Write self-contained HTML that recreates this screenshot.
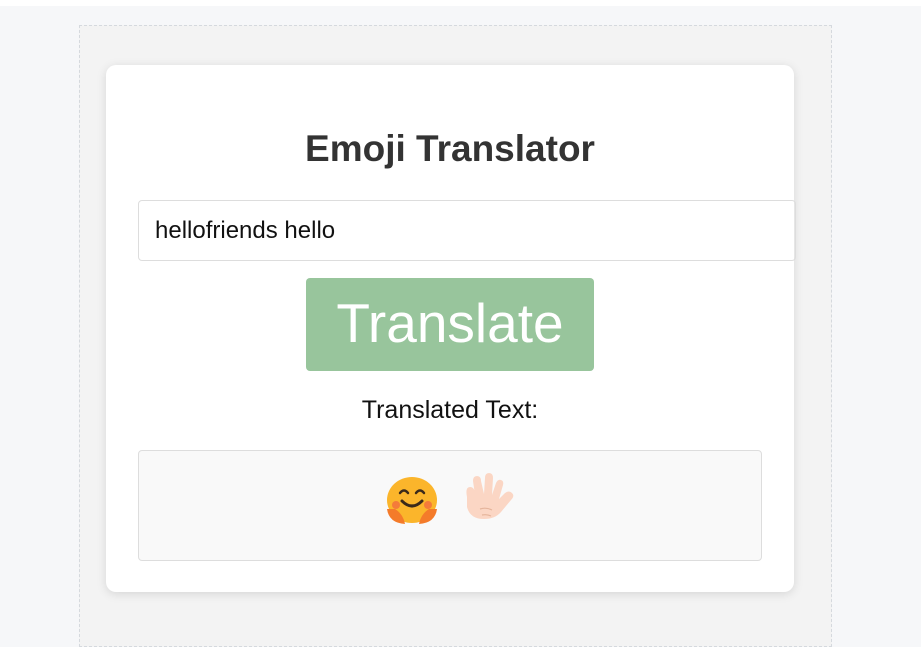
<!DOCTYPE html>
<html><head><style>
body{margin:0;width:921px;height:616px;overflow:hidden;background:#f6f7f9;font-family:"Liberation Sans",Arial,sans-serif;position:relative}
.top{position:absolute;left:0;top:0;width:921px;height:6px;background:#fff}
.box{position:absolute;left:79px;top:25px;width:751px;height:620px;background:#f3f3f3;border:1px dashed #d5d9de}
.card{position:absolute;left:106px;top:65px;width:688px;height:527px;background:#fff;border-radius:10px;box-shadow:0 2px 10px rgba(0,0,0,.12)}
h1{position:absolute;left:0;width:688px;top:63px;margin:0;text-align:center;font-size:37px;color:#333;font-weight:bold}
.in{position:absolute;left:32px;top:135px;width:658px;height:61px;border:1px solid #ddd;border-radius:4px;box-sizing:border-box;font-size:24px;line-height:59px;padding-left:16px;color:#111}
.btn{position:absolute;left:200px;top:213px;width:288px;height:93px;background:#98c59c;border-radius:4px;color:#fff;font-size:55px;text-align:center;line-height:91px}
.lab{position:absolute;left:0;width:688px;top:331px;text-align:center;font-size:25px;color:#111}
.out{position:absolute;left:32px;top:385px;width:624px;height:111px;background:#f9f9f9;border:1px solid #ddd;border-radius:4px;box-sizing:border-box}
</style></head><body>
<div class="top"></div>
<div class="box"></div>
<div class="card">
<h1>Emoji Translator</h1>
<div class="in">hellofriends hello</div>
<div class="btn">Translate</div>
<div class="lab">Translated Text:</div>
<div class="out">
<svg width="140" height="60" style="position:absolute;left:244px;top:22px" viewBox="0 0 140 60">
<ellipse cx="29" cy="27" rx="25" ry="23" fill="#fbb52b"/>
<path d="M17 20q4-5 8 0M33 20q4-5 8 0" stroke="#3b2a1a" stroke-width="2.5" fill="none" stroke-linecap="round"/>
<path d="M19 28q10 10 20 0" stroke="#3b2a1a" stroke-width="3" fill="none" stroke-linecap="round"/>
<circle cx="13" cy="32" r="4" fill="#f47b3a"/><circle cx="45" cy="32" r="4" fill="#f47b3a"/>
<path d="M4 36q2 14 18 15q-2-10-10-15z" fill="#f47b2a"/><path d="M54 36q-2 14-18 15q2-10 10-15z" fill="#f47b2a"/>
<path d="M84 24q-2-10 3-10t5 8l-2-14q0-5 4-5t4 5l3 13l1-16q0-5 4-5t4 5l-1 17l4-12q2-4 5-3t2 5l-4 14l6-6q4-3 7 0t-1 7l-10 12q-6 7-17 7q-14 0-17-12z" fill="#fbd6c4"/>
<path d="M97 36q6-2 12 1M99 42q5-1 9 1" stroke="#e5b49b" stroke-width="1.2" fill="none"/>
</svg>
</div>
</div>
</body></html>
